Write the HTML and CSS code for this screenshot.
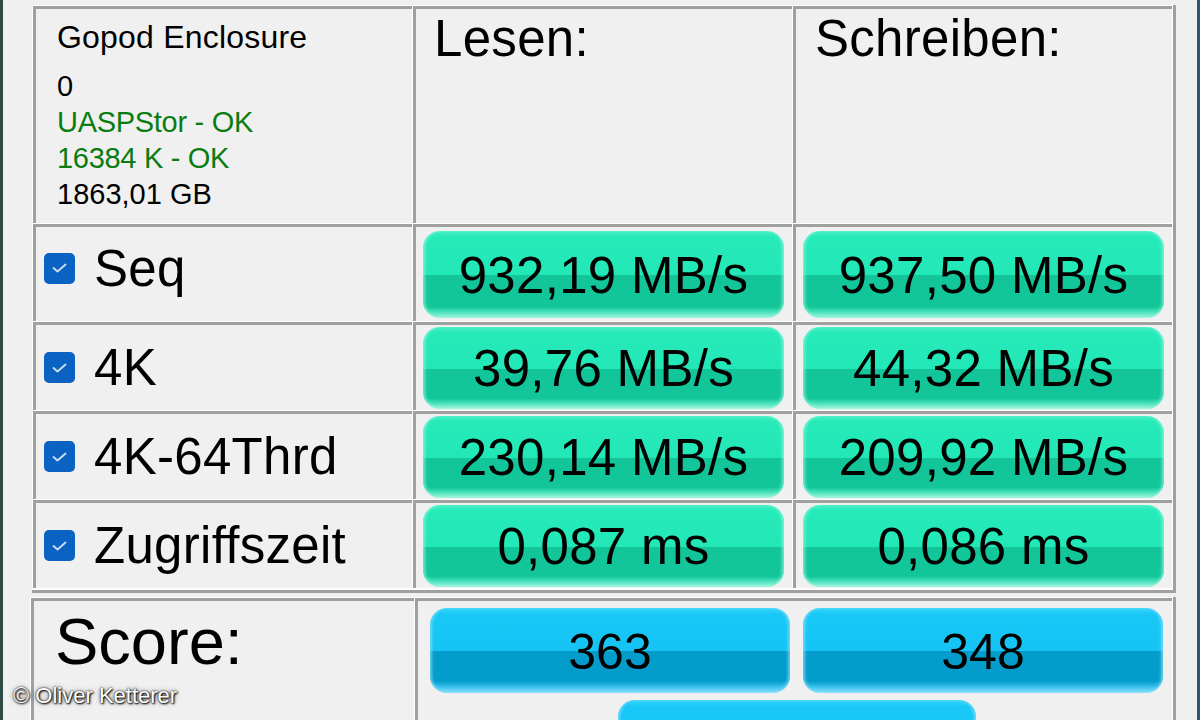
FILE: index.html
```html
<!DOCTYPE html>
<html lang="de">
<head>
<meta charset="utf-8">
<title>AS SSD Benchmark</title>
<link rel="stylesheet" href="styles.css">
</head>
<body>
<div class="app">
  <div class="edge-l"></div>
  <main class="main">
    <section class="results">
      <div class="cell info">
        <div class="drive">Gopod Enclosure</div>
        <div class="line">0</div>
        <div class="line ok">UASPStor - OK</div>
        <div class="line ok">16384 K - OK</div>
        <div class="line">1863,01 GB</div>
      </div>
      <div class="cell head head-read">Lesen:</div>
      <div class="cell head head-write">Schreiben:</div>

      <div class="cell label label-seq">
        <span class="check"><svg viewBox="0 0 17 12" width="17" height="12"><polyline points="2.5,6 6.5,9.5 14.5,2.5"/></svg></span>
        <span>Seq</span>
      </div>
      <div class="cell val"><div class="bar green tall">932,19 MB/s</div></div>
      <div class="cell val"><div class="bar green tall">937,50 MB/s</div></div>

      <div class="cell label">
        <span class="check"><svg viewBox="0 0 17 12" width="17" height="12"><polyline points="2.5,6 6.5,9.5 14.5,2.5"/></svg></span>
        <span>4K</span>
      </div>
      <div class="cell val"><div class="bar green">39,76 MB/s</div></div>
      <div class="cell val"><div class="bar green">44,32 MB/s</div></div>

      <div class="cell label">
        <span class="check"><svg viewBox="0 0 17 12" width="17" height="12"><polyline points="2.5,6 6.5,9.5 14.5,2.5"/></svg></span>
        <span>4K-64Thrd</span>
      </div>
      <div class="cell val"><div class="bar green">230,14 MB/s</div></div>
      <div class="cell val"><div class="bar green">209,92 MB/s</div></div>

      <div class="cell label">
        <span class="check"><svg viewBox="0 0 17 12" width="17" height="12"><polyline points="2.5,6 6.5,9.5 14.5,2.5"/></svg></span>
        <span>Zugriffszeit</span>
      </div>
      <div class="cell val"><div class="bar green">0,087 ms</div></div>
      <div class="cell val"><div class="bar green">0,086 ms</div></div>
    </section>

    <section class="score">
      <div class="cell score-label">Score:</div>
      <div class="cell score-vals">
        <div class="bar blue">363</div>
        <div class="bar blue">348</div>
        <div class="bar blue total"></div>
      </div>
    </section>
  </main>
  <div class="edge-r"></div>
  <div class="watermark">© Oliver Ketterer</div>
</div>
</body>
</html>
```
FILE: styles.css
```css
html, body {
  margin: 0;
  padding: 0;
}

body {
  background: #f0f0f0;
  font-family: "Liberation Sans", Arial, sans-serif;
  color: #000;
  overflow: hidden;
}

.app {
  position: relative;
  display: flex;
  width: 1200px;
  height: 720px;
  overflow: hidden;
}

.edge-l {
  width: 3px;
  flex: none;
  background: #2c4a46;
}

.edge-r {
  width: 3px;
  flex: none;
  background: #2d5872;
}

.main {
  flex: 1;
  display: flex;
  flex-direction: column;
  padding: 5px 0 0 29px;
}

.results {
  box-sizing: border-box;
  width: 1144px;
  display: grid;
  grid-template-columns: repeat(3, 379px);
  grid-template-rows: 217px 97px 88px 88px 88px;
  gap: 1px;
  padding: 1px 1px 2px 1px;
  background: #fff;
  border-right: 3px solid #a0a0a0;
  border-bottom: 3px solid #a0a0a0;
}

.cell {
  box-sizing: border-box;
  min-width: 0;
  background: #f0f0f0;
  border-top: 3px solid #a0a0a0;
  border-left: 3px solid #a0a0a0;
}

/* info cell */
.info {
  padding: 10px 0 0 21px;
}

.drive {
  font-size: 32px;
  line-height: 36px;
  letter-spacing: 0.2px;
  margin-bottom: 13px;
}

.line {
  font-size: 29px;
  line-height: 36px;
}

.line.ok {
  color: #0a7d12;
  letter-spacing: -0.3px;
}

/* header */
.head {
  font-size: 51px;
  letter-spacing: 0.3px;
  line-height: 1;
  padding-top: 4px;
}

.head-read {
  padding-left: 18px;
}

.head-write {
  padding-left: 19px;
}

/* labels */
.label {
  display: flex;
  align-items: center;
  gap: 19px;
  padding-left: 8px;
  font-size: 51px;
  letter-spacing: 0.3px;
}

.label-seq {
  padding-bottom: 12px;
}

.check {
  width: 31px;
  height: 31px;
  flex: none;
  border-radius: 5px;
  background: #0a62c2;
  display: flex;
  align-items: center;
  justify-content: center;
}

.check polyline {
  fill: none;
  stroke: #cfdff3;
  stroke-width: 1.8;
  stroke-linecap: round;
  stroke-linejoin: round;
}

/* value cells */
.val {
  display: flex;
  align-items: center;
  padding: 0 8px 0 7px;
}

.bar {
  box-sizing: border-box;
  display: flex;
  align-items: center;
  justify-content: center;
  border-radius: 17px;
  font-size: 51px;
  letter-spacing: 0.3px;
  color: #000;
  white-space: nowrap;
}

.bar.green {
  width: 100%;
  height: 82px;
  padding-top: 2px;
  background: linear-gradient(to bottom, #45f0c6 0, #27eab9 7%, #22e7b6 51%, #12c699 51%, #12c699 87%, #48e1bb 93%, #a8f7e1 100%);
  box-shadow: inset 3px 0 3px -1px rgba(150, 250, 220, 0.7), inset -3px 0 3px -1px rgba(150, 250, 220, 0.7);
}

.bar.green.tall {
  height: 87px;
}

.bar.blue {
  height: 85px;
  font-size: 50px;
  letter-spacing: 0;
  padding-top: 2px;
  background: linear-gradient(to bottom, #3cd6fc 0, #19c8f7 7%, #15c3f4 51%, #049cca 51%, #049cca 86%, #3cc2ee 93%, #8ee2fc 100%);
  box-shadow: inset 3px 0 3px -1px rgba(140, 225, 252, 0.7), inset -3px 0 3px -1px rgba(140, 225, 252, 0.7);
}

/* score */
.score {
  box-sizing: border-box;
  width: 1146px;
  height: 200px;
  margin: 4px 0 0 -2px;
  display: grid;
  grid-template-columns: 383px 757px;
  gap: 1px;
  padding: 1px 1px 0 1px;
  background: #fff;
  border-right: 3px solid #a0a0a0;
}

.score-label {
  font-size: 65px;
  line-height: 1;
  padding: 8px 0 0 21px;
}

.score-vals {
  display: grid;
  grid-template-columns: 360px 360px;
  column-gap: 13px;
  row-gap: 7px;
  align-content: start;
  padding: 7px 8px 0 12px;
}

.bar.total {
  grid-column: 1 / -1;
  justify-self: center;
  width: 358px;
}

/* watermark overlay */
.watermark {
  position: absolute;
  left: 13px;
  top: 685px;
  font-size: 22px;
  line-height: 1;
  color: #fff;
  text-shadow: 0 0 2px #000, 1px 1px 2px #000, 0 0 5px rgba(0, 0, 0, 0.5);
}
```
